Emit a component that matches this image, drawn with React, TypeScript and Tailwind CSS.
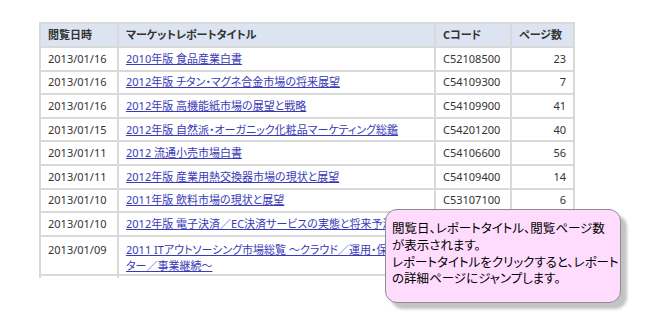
import React from "react";

const rows: { date: string; title: React.ReactNode; code: string; pages: string; tall?: boolean }[] = [
  { date: "2013/01/16", title: "2010年版 食品産業白書", code: "C52108500", pages: "23" },
  { date: "2013/01/16", title: "2012年版 チタン・マグネ合金市場の将来展望", code: "C54109300", pages: "7" },
  { date: "2013/01/16", title: "2012年版 高機能紙市場の展望と戦略", code: "C54109900", pages: "41" },
  { date: "2013/01/15", title: "2012年版 自然派・オーガニック化粧品マーケティング総鑑", code: "C54201200", pages: "40" },
  { date: "2013/01/11", title: "2012 流通小売市場白書", code: "C54106600", pages: "56" },
  { date: "2013/01/11", title: "2012年版 産業用熱交換器市場の現状と展望", code: "C54109400", pages: "14" },
  { date: "2013/01/10", title: "2011年版 飲料市場の現状と展望", code: "C53107100", pages: "6" },
  { date: "2013/01/10", title: "2012年版 電子決済／EC決済サービスの実態と将来予測", code: "C54109800", pages: "18" },
  {
    date: "2013/01/09",
    title: (
      <>
        <span className="whitespace-nowrap">2011 ITアウトソーシング市場総覧 ～クラウド／運用・保守／データセン</span>
        <br />
        ター／事業継続～
      </>
    ),
    code: "C54107700",
    pages: "12",
    tall: true,
  },
];

const font = "font-['Noto_Sans','Noto_Sans_CJK_JP',sans-serif] [font-feature-settings:'palt']";
const cell = "border-2 border-[#d9d9d9] px-[7px] leading-[16px]";

export default function App() {
  return (
    <div className={`relative w-[650px] h-[325px] bg-white overflow-hidden ${font}`}>
      <div className="pt-[22px] pl-[39px] h-[278px] overflow-hidden">
        <table className="border-collapse table-fixed w-[534px] text-[11px] text-[#333333]">
          <colgroup>
            <col className="w-[78px]" />
            <col className="w-[317px]" />
            <col className="w-[76px]" />
            <col className="w-[63px]" />
          </colgroup>
          <thead>
            <tr className="bg-[#dce3f1] h-[24px]">
              <th className={`${cell} text-left font-bold`}>閲覧日時</th>
              <th className={`${cell} text-left font-bold`}>マーケットレポートタイトル</th>
              <th className={`${cell} text-left font-bold`}>Cコード</th>
              <th className={`${cell} text-left font-bold`}>ページ数</th>
            </tr>
          </thead>
          <tbody>
            {rows.map((r, i) => (
              <tr key={i} className={r.tall ? "h-[37px] align-top" : "h-[23.6px]"}>
                <td className={`${cell} ${r.tall ? "pt-[5px]" : ""}`}>{r.date}</td>
                <td className={`${cell} ${r.tall ? "pt-[5px]" : ""}`}>
                  <a href="#" className="text-[#3a3ab8] underline">{r.title}</a>
                </td>
                <td className={`${cell} ${r.tall ? "pt-[5px]" : ""}`}>{r.code}</td>
                <td className={`${cell} text-right ${r.tall ? "pt-[5px]" : ""}`}>{r.pages}</td>
              </tr>
            ))}
            <tr className="h-[24px]">
              <td className={cell}></td>
              <td className={cell}></td>
              <td className={cell}></td>
              <td className={cell}></td>
            </tr>
          </tbody>
        </table>
      </div>

      <div className="absolute left-[385px] top-[209px] w-[236px] h-[94px] rounded-[12px] border border-[#8c8c8c] bg-[#ffdcfd] shadow-[6px_6px_3px_#c4c4c4] pl-[6px] pt-[11px] text-[12.5px] leading-[16.8px] text-black whitespace-nowrap">
        <p>閲覧日、レポートタイトル、閲覧ページ数</p>
        <p>が表示されます。</p>
        <p>レポートタイトルをクリックすると、レポート</p>
        <p>の詳細ページにジャンプします。</p>
      </div>
    </div>
  );
}
